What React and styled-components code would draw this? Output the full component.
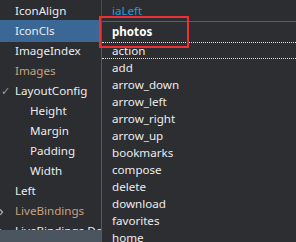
import styled, { createGlobalStyle } from "styled-components"

const GlobalStyle = createGlobalStyle`
  html, body {
    margin: 0;
    padding: 0;
    background: #2b2d31;
  }
  body {
    font-family: "Noto Sans", "Open Sans", sans-serif;
    font-size: 11.6px;
    color: #ececec;
  }
`

const props = [
  { name: "IconAlign", value: "iaLeft" },
  { name: "IconCls", selected: true },
  { name: "ImageIndex" },
  { name: "Images", tone: "ref" },
  { name: "LayoutConfig", checked: true },
  { name: "Height", level: 1 },
  { name: "Margin", level: 1 },
  { name: "Padding", level: 1 },
  { name: "Width", level: 1 },
  { name: "Left" },
  { name: "LiveBindings", tone: "ref", arrow: true },
  { name: "LiveBindings Designer", arrow: true },
]

const icons = [
  "action",
  "add",
  "arrow_down",
  "arrow_left",
  "arrow_right",
  "arrow_up",
  "bookmarks",
  "compose",
  "delete",
  "download",
  "favorites",
  "home",
]

function App() {
  return (
    <Inspector>
      <GlobalStyle />
      <NameColumn>
        <Rows>
          {props.map((p) => (
            <PropRow key={p.name} $selected={p.selected} $level={p.level || 0} $tone={p.tone}>
              {p.checked && <Mark>✓</Mark>}
              {p.arrow && <Arrow>›</Arrow>}
              {p.name}
            </PropRow>
          ))}
        </Rows>
        <ScrollBar />
      </NameColumn>
      <ValueColumn>
        <ValueCell>iaLeft</ValueCell>
        <Combo>
          <ComboEdit>photos</ComboEdit>
          <Highlight />
          <List>
            {icons.map((name, i) => (
              <Item key={name} $focused={i === 0}>
                {name}
              </Item>
            ))}
          </List>
        </Combo>
      </ValueColumn>
    </Inspector>
  )
}

export default App

const Inspector = styled.div`
  display: flex;
  width: 296px;
  height: 242px;
  overflow: hidden;
  background: #2b2d31;
`

const NameColumn = styled.div`
  width: 101px;
  flex-shrink: 0;
  display: flex;
  flex-direction: column;
  height: 242px;
`

const Rows = styled.div`
  flex: 1;
  overflow: hidden;
  padding-top: 1px;
`

const PropRow = styled.div`
  position: relative;
  height: 20px;
  line-height: 20px;
  white-space: nowrap;
  padding-left: ${(p) => 15 + p.$level * 15}px;
  color: ${(p) => (p.$tone === "ref" ? "#c9a27c" : "#ececec")};
  background: ${(p) => (p.$selected ? "#3a6796" : "transparent")};
  box-shadow: ${(p) => (p.$selected ? "0 -1px 0 #3a6796, 0 1px 0 #3a6796" : "none")};
`

const Mark = styled.span`
  position: absolute;
  left: 1px;
  top: 0;
  font-size: 11px;
  color: #9a9ca0;
`

const Arrow = styled.span`
  position: absolute;
  left: -1px;
  top: -1px;
  font-size: 15px;
  color: #b5b7ba;
`

const ScrollBar = styled.div`
  height: 12px;
  flex-shrink: 0;
  background: #4b5560;
`

const ValueColumn = styled.div`
  flex: 1;
  display: flex;
  flex-direction: column;
  border-left: 1px solid #4a4c51;
`

const ValueCell = styled.div`
  height: 21px;
  line-height: 21px;
  padding-left: 10px;
  color: #1f9ee0;
  border-bottom: 1px solid #3a6796;
`

const Combo = styled.div`
  position: relative;
  flex: 1;
  background: #2c2e32;
  border-left: 1px solid #55585e;
  margin-left: -1px;
`

const ComboEdit = styled.div`
  height: 20px;
  line-height: 20px;
  padding-left: 10px;
  font-weight: 700;
  color: #ffffff;
`

const Highlight = styled.div`
  position: absolute;
  left: -3px;
  top: -6px;
  width: 86px;
  height: 28px;
  border: 2px solid #ec3035;
`

const List = styled.div`
  display: flex;
  flex-direction: column;
`

const Item = styled.div`
  height: 17px;
  line-height: 16px;
  padding-left: 10px;
  box-sizing: border-box;
  color: #ececec;
  border-top: 1px ${(p) => (p.$focused ? "dotted #e0e0e0" : "solid transparent")};
  border-bottom: 1px ${(p) => (p.$focused ? "dotted #e0e0e0" : "solid transparent")};
`
